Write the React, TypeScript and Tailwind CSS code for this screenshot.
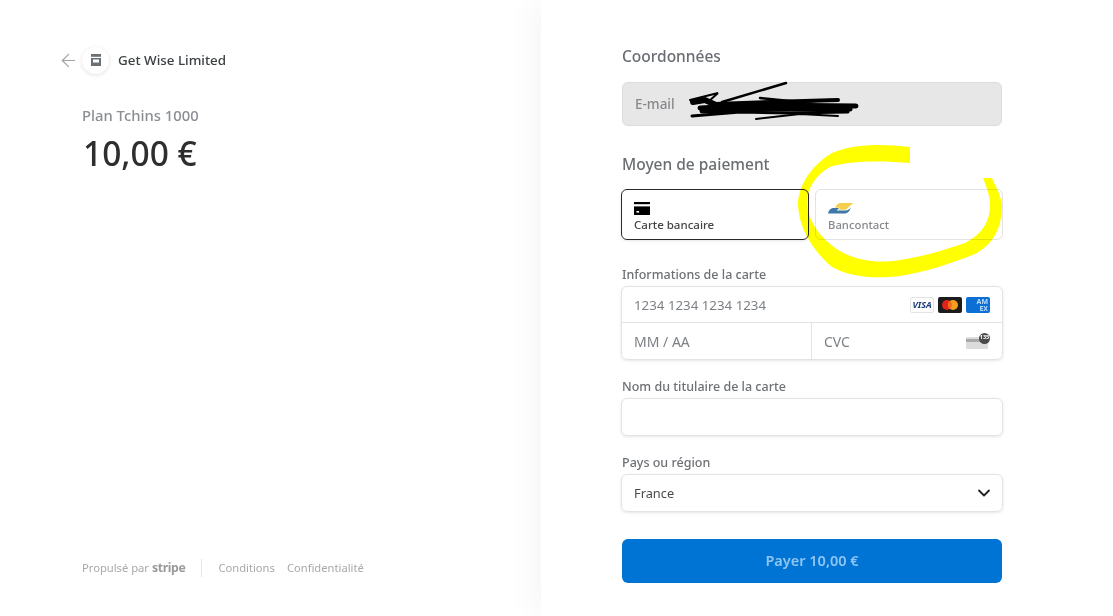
import { ArrowLeft, ChevronDown } from "lucide-react";

const StoreIcon = () => (
  <svg width="14" height="14" viewBox="0 0 14 14">
    <path d="M2 1h10v2.800H2z" fill="#6b6f76" />
    <path d="M2 5h10v8H2z" fill="#6b6f76" />
    <path d="M4 6.500h6v3H4z" fill="#fff" />
  </svg>
);

const CardIcon = () => (
  <svg width="16" height="13" viewBox="0 0 16 13">
    <path d="M0 0h16v2.200H0z" fill="#000" />
    <path d="M0 4.400h16V13H0z" fill="#000" />
    <path d="M2.500 9h2.600v1.600H2.500z" fill="#fff" />
  </svg>
);

const BancontactIcon = () => (
  <svg width="26" height="12" viewBox="0 0 26 12">
    <path d="M0 11.500c1-4 3-5.500 6-5.500h5c-1 1-1.500 2-2.500 2.600H17c3 0 5-1.500 6-3.600-1 3.800-3 6.500-7 6.500H1z" fill="#3f78a8" />
    <path d="M7 5.800C9 2 10.500 1 13 1h12.500L23 3c-2 1.500-3.500 4.500-6.500 4.800H10.500c.5-.8 1-1.500 1.500-2z" fill="#f5cf4b" />
  </svg>
);

const BrandIcons = () => (
  <div className="flex items-center gap-1">
    <div className="flex h-4 w-6 items-center justify-center rounded-[2px] border border-[#e3e3e3] bg-white text-[9px] font-bold italic leading-none text-[#1a3c7c]">
      VISA
    </div>
    <div className="flex h-4 w-6 items-center justify-center rounded-[2px] bg-[#1c1c1c]">
      <svg width="18" height="12" viewBox="0 0 18 12">
        <circle cx="6" cy="6" r="5" fill="#e2231a" />
        <circle cx="12" cy="6" r="5" fill="#f79e1b" />
        <path d="M9 2a5 5 0 0 1 0 8 5 5 0 0 1 0-8z" fill="#f26a21" />
      </svg>
    </div>
    <div className="flex h-4 w-6 flex-col items-end justify-center rounded-[2px] bg-[#0b6fd6] pr-[2px] text-[7px] font-bold leading-[7px] text-[#bcdcf8]">
      <span>AM</span>
      <span>EX</span>
    </div>
  </div>
);

const CvcIcon = () => (
  <div className="relative h-[15px] w-6">
    <div className="absolute bottom-0 left-0 flex h-[12px] w-[22px] flex-col rounded-[1px] bg-[#dcdcdc] pt-[2px]">
      <div className="h-[3px] bg-[#a8a8a8]" />
    </div>
    <div className="absolute -top-[1px] right-0 flex h-[11px] w-[11px] items-center justify-center rounded-full bg-[#4a4a4a] text-[5.500px] font-bold leading-none text-white">
      135
    </div>
  </div>
);

const FieldShadow = "shadow-[0_1px_3px_rgba(0,0,0,0.1)]";

export default function App() {
  return (
    <div className="relative flex h-[616px] w-[1113px] overflow-hidden bg-white font-['Noto_Sans','Open_Sans',sans-serif] text-[#1a1a1a]">
      {/* left column */}
      <div className="flex w-[541px] shrink-0 flex-col justify-between pb-[36px] pl-[61px] pt-[46px]">
        <div>
          <div className="flex h-7 items-center">
            <ArrowLeft size={21} strokeWidth={1.400} className="-ml-[3px] text-[#a3a3a3]" />
            <div className="ml-[3px] flex h-[27px] w-[27px] items-center justify-center rounded-full bg-white shadow-[0_1px_4px_rgba(0,0,0,0.12)]">
              <StoreIcon />
            </div>
            <span className="ml-[9px] text-[13.400px] font-medium text-[#3c4043]">Get Wise Limited</span>
          </div>
          <div className="ml-[21px] mt-[29px] text-[14.800px] font-medium leading-[24px] text-[#8a8d92]">Plan Tchins 1000</div>
          <div className="ml-[22px] mt-[3px] text-[33.500px] font-medium leading-[46px] text-[#2e2e30]">10,00 €</div>
        </div>
        <div className="ml-[21px] flex h-6 items-center text-[11.200px] text-[#a8a8a8]">
          <span>Propulsé par</span>
          <span className="ml-[3px] text-[12.300px] font-bold tracking-[-0.4px] text-[#9a9a9a]">stripe</span>
          <div className="ml-4 h-[18px] w-px bg-[#e5e5e5]" />
          <span className="ml-4">Conditions</span>
          <span className="ml-3">Confidentialité</span>
        </div>
      </div>

      {/* right column */}
      <div className="flex-1 pl-[81px] pt-[46px] shadow-[-12px_0_24px_rgba(0,0,0,0.03)]">
        <div className="w-[380px]">
          <h2 className="text-[15.500px] font-medium leading-[21px] text-[#6a6d72]">Coordonnées</h2>
          <div className="mt-[15px] flex h-[44px] items-center rounded-md border border-[#dcdcdc] bg-[#e7e7e7] px-3 text-[13.500px] font-medium text-[#85888c]">
            E-mail
          </div>

          <h2 className="mt-[28px] text-[15.500px] font-medium leading-[21px] text-[#6a6d72]">Moyen de paiement</h2>
          <div className="-mx-px mt-[14px] flex gap-[6px]">
            <div className={`flex h-[51px] flex-1 flex-col rounded-md border border-[#2a2a2a] pl-3 pt-[12px] ${FieldShadow}`}>
              <CardIcon />
              <span className="mt-[2px] text-[11.500px] font-medium leading-[16px] text-[#444]">Carte bancaire</span>
            </div>
            <div className="flex h-[51px] flex-1 flex-col rounded-md border border-[#e3e3e3] pl-3 pt-[12px]">
              <BancontactIcon />
              <span className="mt-[3px] text-[11.300px] font-medium leading-[16px] text-[#85888c]">Bancontact</span>
            </div>
          </div>

          <label className="mt-[26px] block text-[12.500px] font-medium leading-[17px] text-[#6d7075]">Informations de la carte</label>
          <div className={`-mx-px mt-[3px] rounded-md border border-[#e3e3e3] ${FieldShadow}`}>
            <div className="flex h-[36px] items-center justify-between border-b border-[#e3e3e3] pl-3 pr-[12px] text-[13.300px] text-[#7d8085]">
              <span className="pt-[2px]">1234 1234 1234 1234</span>
              <BrandIcons />
            </div>
            <div className="flex h-[36px] text-[14px] text-[#7d8085]">
              <div className="flex w-[190px] items-center border-r border-[#e3e3e3] pl-3">MM / AA</div>
              <div className="flex flex-1 items-center justify-between pl-3 pr-[12px]">
                <span>CVC</span>
                <CvcIcon />
              </div>
            </div>
          </div>

          <label className="mt-[18px] block text-[12.500px] font-medium leading-[17px] text-[#6d7075]">Nom du titulaire de la carte</label>
          <div className={`-mx-px mt-[3px] h-[38px] rounded-md border border-[#e3e3e3] ${FieldShadow}`} />

          <label className="mt-[18px] block text-[12.500px] font-medium leading-[17px] text-[#6d7075]">Pays ou région</label>
          <div className={`-mx-px mt-[3px] flex h-[38px] items-center justify-between rounded-md border border-[#e3e3e3] pl-3 pr-2 text-[12.800px] text-[#4a4a4a] ${FieldShadow}`}>
            <span className="pt-[2px]">France</span>
            <ChevronDown size={20} strokeWidth={2.200} className="text-[#222]" />
          </div>

          <button className="mt-[27px] h-[44px] w-full rounded-md bg-[#0074d4] text-[14.500px] font-semibold text-[#8ec5f2]">Payer 10,00 €</button>
        </div>
      </div>

      {/* hand drawn marks on top of the screenshot */}
      <svg className="pointer-events-none absolute left-0 top-0 mix-blend-multiply" width="1113" height="616" viewBox="0 0 1113 616" fill="none">
        <path
          d="M910 147C885 144 855 143 832 153C812 165 798 185 798 205C799 228 812 250 832 267C850 277 875 279 900 276C925 272 950 264 975 254C990 246 1002 232 1002 205C1000 192 994 184 992 178L983 178C986 186 990 195 990 205C990 222 982 234 965 243C945 250 925 256 900 260C875 264 855 260 838 250C820 238 809 222 807 205C806 190 815 175 830 167C850 160 885 161 910 163Z"
          fill="#ffff00"
        />
        <g stroke="#000" strokeLinecap="round">
          <path d="M722 102L786 83" strokeWidth="2.500" />
          <path d="M690 100L718 93L708 102" strokeWidth="2" />
          <path d="M693 102L705 100L716 105" strokeWidth="6" />
          <path d="M715 104L770 102L838 100" strokeWidth="4" />
          <path d="M760 98L800 102L830 100" strokeWidth="2.500" />
          <path d="M700 108L760 105L856 106" strokeWidth="5" />
          <path d="M702 111L770 109L850 109" strokeWidth="5" />
          <path d="M692 116L740 112L790 113L848 112" strokeWidth="3" />
          <path d="M756 119L800 114L838 116" strokeWidth="2" />
        </g>
      </svg>
    </div>
  );
}
